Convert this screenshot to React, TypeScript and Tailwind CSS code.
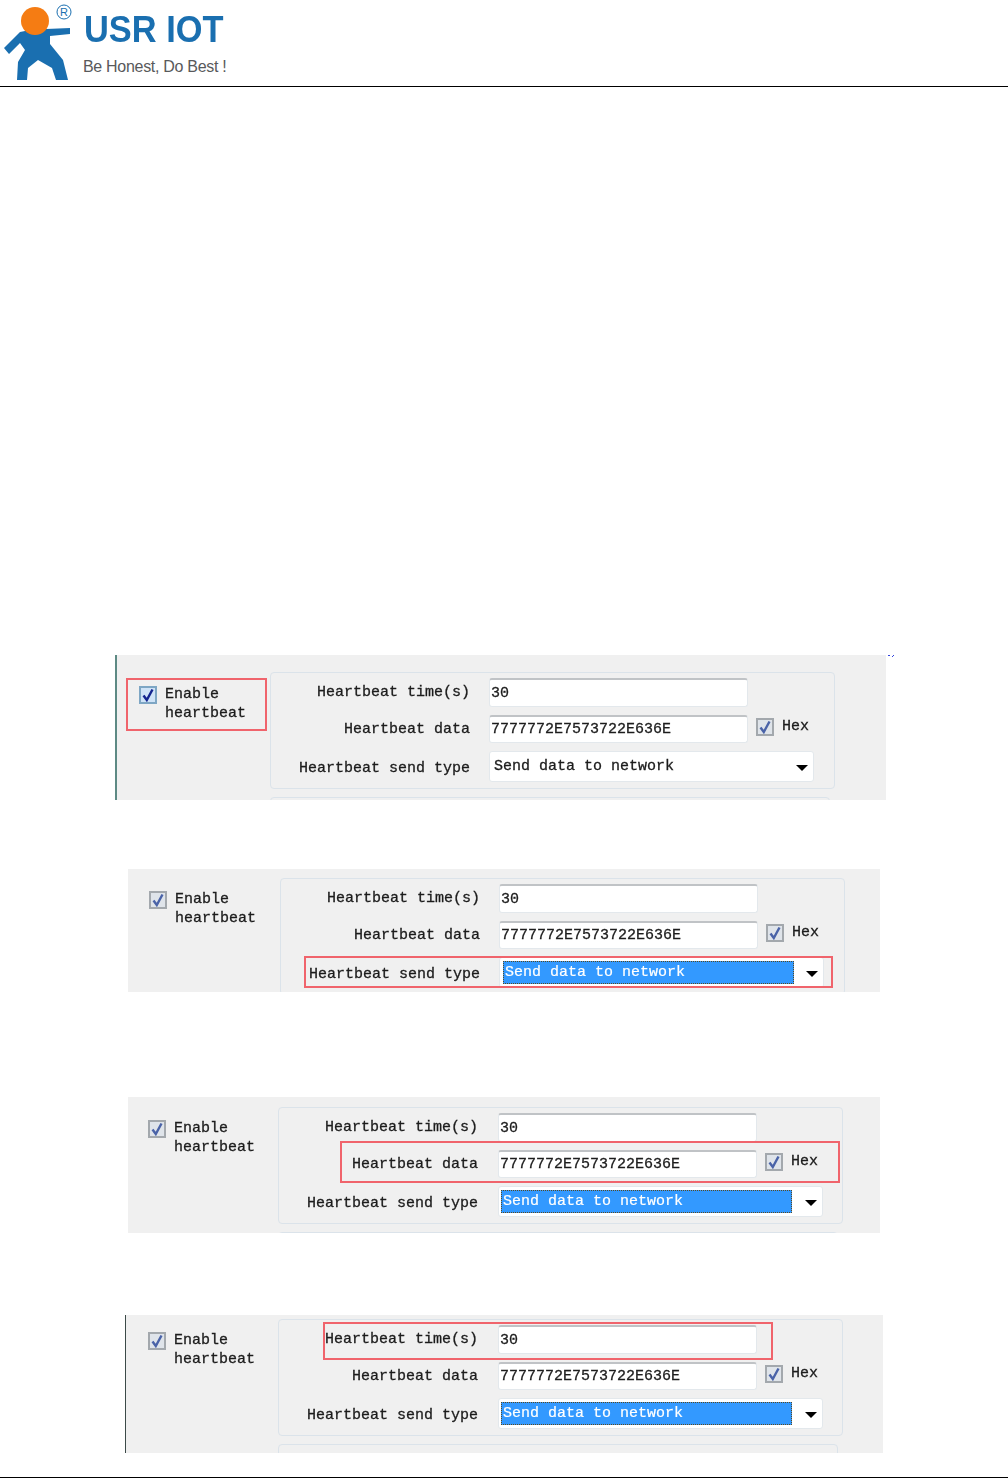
import React from 'react';

const mono = "font-['Liberation_Mono',monospace] text-[15px] leading-[19px] text-[#1c1c1c] [-webkit-text-stroke:0.3px_#1c1c1c]";

function Checkbox({ focused = false }: { focused?: boolean }) {
  return (
    <span className={`flex h-[18px] w-[18px] shrink-0 items-center justify-center border-2 ${focused ? 'border-[#7ea6c4] bg-[#cfe3f7]' : 'border-[#a3a8ad] bg-[#dfe4ea]'}`}>
      <svg width="14" height="14" viewBox="0 0 14 14">
        <path d="M2.5 7.5 L5.8 12 L11.5 1.5" fill="none" stroke={focused ? '#14248f' : '#4a63a8'} strokeWidth="2.4" />
      </svg>
    </span>
  );
}

function Field({ children, className }: { children?: React.ReactNode; className: string }) {
  return (
    <div className={`flex items-center rounded-[3px] border border-[#e3e8ec] border-t-2 border-t-[#c0c3c6] bg-white pl-[1px] ${className}`}>
      {children}
    </div>
  );
}

function GroupBox({ highlighted, shifted }: { highlighted: boolean; shifted: boolean }) {
  // the two lower shots have their fields one pixel further right
  const fieldLeft = shifted ? 'ml-[20px]' : 'ml-[19px]';
  const selectPad = shifted ? 'pl-[2px]' : 'pl-[3px]';

  return (
    <div className="h-[117px] w-[565px] shrink-0 rounded-[4px] border border-[#dbe3ea] pt-[5px]">
      <div className="flex items-center">
        <span className={`w-[199px] text-right ${mono}`}>Heartbeat time(s)</span>
        <Field className={`${fieldLeft} h-[29px] w-[259px]`}>30</Field>
      </div>
      <div className="mt-[8px] flex items-center">
        <span className={`w-[199px] text-right ${mono}`}>Heartbeat data</span>
        <Field className={`${fieldLeft} h-[28px] w-[259px]`}>7777772E7573722E636E</Field>
        <span className="ml-[8px] -translate-y-[2px]"><Checkbox /></span>
        <span className={`ml-[8px] -translate-y-[3px] ${mono}`}>Hex</span>
      </div>
      <div className="mt-[8px] flex items-center">
        <span className={`w-[199px] pt-[3px] text-right ${mono}`}>Heartbeat send type</span>
        <div className={`${fieldLeft} ${selectPad} flex h-[31px] w-[325px] items-center rounded-[3px] border border-[#e3e8ec] bg-white pr-[5px]`}>
          {highlighted ? (
            <span className="flex h-[23px] w-[291px] items-center border border-dotted border-[#5a4a20] bg-[#3399ff] pl-[1px] text-white [-webkit-text-stroke:0.2px_#ffffff]">
              Send data to network
            </span>
          ) : (
            <span className="pl-[1px]">Send data to network</span>
          )}
          <span className="ml-auto mt-[3px] h-0 w-0 border-x-[6px] border-t-[6px] border-x-transparent border-t-black" />
        </div>
      </div>
    </div>
  );
}

function HeartbeatPanel({ className, leftClass, columnClass, shifted = false, focused = false, highlighted = true, children }: {
  className: string;
  leftClass: string;
  columnClass: string;
  shifted?: boolean;
  focused?: boolean;
  highlighted?: boolean;
  children: React.ReactNode;
}) {
  return (
    <div className={`relative flex items-start overflow-hidden bg-[#f0f0f0] blur-[0.4px] ${mono} ${className}`}>
      <div className={`flex shrink-0 gap-[8px] ${leftClass}`}>
        <Checkbox focused={focused} />
        <span className="-mt-[1px] block">Enable<br />heartbeat</span>
      </div>
      <div className={`flex flex-col gap-[8px] ${columnClass}`}>
        <GroupBox highlighted={highlighted} shifted={shifted} />
        <div className="h-[40px] w-[560px] rounded-[4px] border border-[#dbe3ea]" />
      </div>
      {children}
    </div>
  );
}

function RedBox({ className }: { className: string }) {
  return <div className={`absolute border-2 border-[#f0646c] ${className}`} />;
}

function Logo() {
  return (
    <div className="flex h-[86px] items-start">
      <svg width="84" height="86" viewBox="0 0 84 86" className="shrink-0">
        <path d="M70 28 L70 34 L50 36 L50 44 L63 60 L68 80 L56 80 L52 68 L38 60 L28 68 L27 80 L17 80 L18 62 L25 50 L20 43 L9 54 L4 48 L20 32 L30 30 L46 29 Z" fill="#1a6fb0" />
        <circle cx="35" cy="21" r="14" fill="#f57c13" />
        <circle cx="64" cy="12" r="7" fill="none" stroke="#1a6fb0" strokeWidth="1" />
        <text x="64" y="16" textAnchor="middle" fontFamily="Liberation Sans" fontSize="11" fill="#1a6fb0">R</text>
      </svg>
      <div className="flex flex-col">
        <span className="mt-[9px] origin-left scale-x-[0.93] font-['Liberation_Sans',sans-serif] text-[37px] font-bold leading-[42px] text-[#1a6fb0]">USR IOT</span>
        <span className="-ml-[1px] mt-[7px] font-['Liberation_Sans',sans-serif] text-[16px] leading-[18px] tracking-[-0.3px] text-[#58595b]">Be Honest, Do Best !</span>
      </div>
    </div>
  );
}

export default function App() {
  return (
    <div className="flex h-[1478px] w-[1008px] flex-col overflow-hidden bg-white">
      <header className="h-[87px] shrink-0 border-b border-black">
        <Logo />
      </header>

      {/* first shot, enable checkbox marked */}
      <div className="relative ml-[115px] mt-[568px] w-[771px]">
        <HeartbeatPanel
          className="h-[145px] border-l-[2px] border-l-[#5d8a84]"
          leftClass="w-[153px] pl-[22px] pt-[31px]"
          columnClass="pt-[17px]"
          focused
          highlighted={false}
        >
          <RedBox className="left-[9px] top-[23px] h-[53px] w-[141px]" />
        </HeartbeatPanel>
        <svg width="6" height="3" className="absolute left-[773px] top-0">
          <path d="M0 0.5h2M4 2l2-2" stroke="#3344dd" fill="none" />
        </svg>
      </div>

      <div className="ml-[128px] mt-[69px] w-[752px]">
        <HeartbeatPanel className="h-[123px]" leftClass="w-[152px] pl-[21px] pt-[22px]" columnClass="pt-[9px]">
          <RedBox className="left-[176px] top-[87px] h-[32px] w-[529px]" />
        </HeartbeatPanel>
      </div>

      <div className="ml-[128px] mt-[105px] w-[752px]">
        <HeartbeatPanel className="h-[136px]" leftClass="w-[150px] pl-[20px] pt-[23px]" columnClass="pt-[10px]" shifted>
          <RedBox className="left-[212px] top-[44px] h-[42px] w-[500px]" />
        </HeartbeatPanel>
      </div>

      <div className="ml-[125px] mt-[82px] w-[758px]">
        <HeartbeatPanel className="h-[138px] border-l border-l-[#3c4a48]" leftClass="w-[152px] pl-[22px] pt-[17px]" columnClass="pt-[4px]" shifted>
          <RedBox className="left-[197px] top-[7px] h-[38px] w-[450px]" />
        </HeartbeatPanel>
      </div>

      <footer className="mt-[24px] h-px shrink-0 bg-black" />
    </div>
  );
}
